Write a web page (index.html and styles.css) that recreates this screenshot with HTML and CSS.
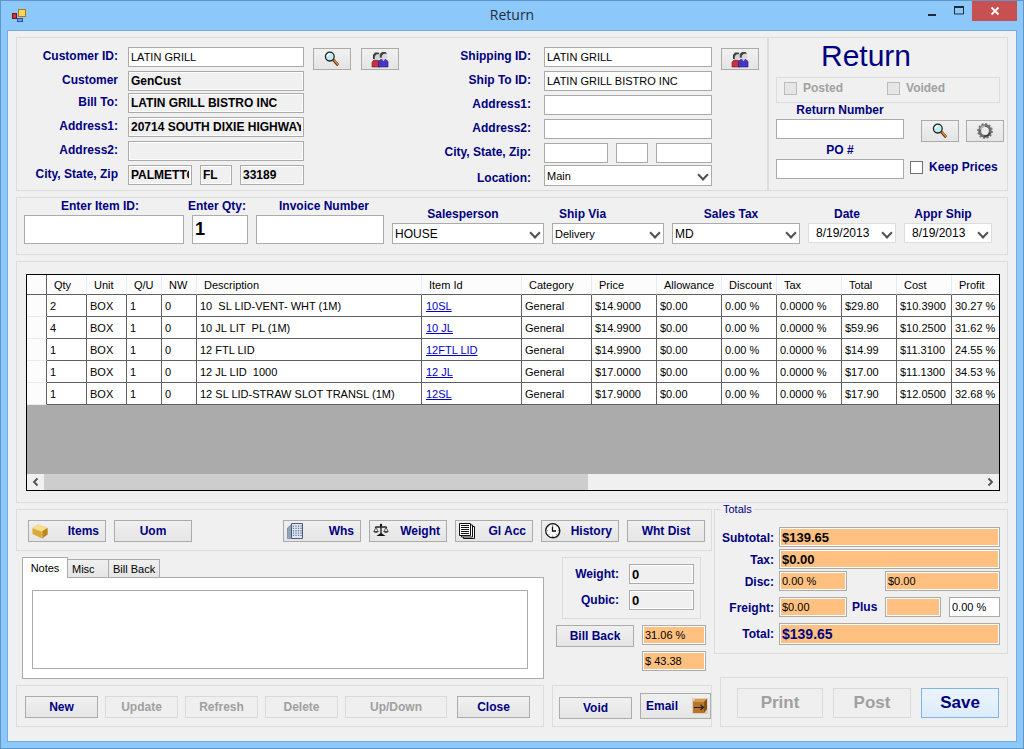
FILE: index.html
```html
<!DOCTYPE html>
<html lang="en">
<head>
	<meta charset="utf-8">
	<title>Return</title>
	<link rel="stylesheet" href="styles.css">
</head>
<body>

<!-- shared icons -->
<svg class="defs" aria-hidden="true">
	<symbol id="i-search" viewBox="0 0 16 16">
		<path d="M9.2 8.8l5 5.400" stroke="#6b3f16" stroke-width="3"/>
		<path d="M9.6 8.8l4.8 5" stroke="#d08a4a" stroke-width="1.6"/>
		<circle cx="5.8" cy="5.6" r="4.400" fill="#bfeef0" stroke="#222" stroke-width="1.3"/>
		<path d="M3.4 5.2a2.5 2.5 0 0 1 2.4-2.4" fill="none" stroke="#fff" stroke-width="1.3"/>
	</symbol>
	<symbol id="i-people" viewBox="0 0 18 17">
		<path d="M1 16v-5l2-2h4l2 2v5z" fill="#c23340" stroke="#7e1822" stroke-width=".6"/>
		<circle cx="5.500" cy="5.500" r="3.600" fill="#d4d4d4"/>
		<path d="M2 8V4l2-2.500h3.500L8.500 3 5 3.500 3.800 5.500V8z" fill="#3a3a3a"/>
		<path d="M7.500 16v-5.500l2-2h5.500l2 2V16z" fill="#4a35c0" stroke="#231378" stroke-width=".6"/>
		<circle cx="12.600" cy="4.800" r="3.700" fill="#d9d9d9"/>
		<path d="M8.800 6.500V3L11 1h3.500l1.500 1.500-3.500.5-1.500 1.500-.5 2.500z" fill="#444"/>
		<path d="M11 8.500h3L12.500 10z" fill="#f4f4f4"/>
	</symbol>
	<symbol id="i-gear" viewBox="0 0 16 16">
		<circle cx="8" cy="8" r="7" fill="none" stroke="#777" stroke-width="1.800" stroke-dasharray="2 1.660"/>
		<circle cx="8" cy="8" r="5.300" fill="none" stroke="#6a6a6a" stroke-width="2.800"/>
		<path d="M3.400 6.500A5 5 0 0 1 8 3" fill="none" stroke="#bbb" stroke-width="1.400"/>
		<path d="M12.600 9.500A5 5 0 0 1 7 13" fill="none" stroke="#333" stroke-width="1.200"/>
	</symbol>
</svg>

<div class="window">
	<header class="titlebar">
		<svg class="appicon" width="14" height="14" viewBox="0 0 14 14">
			<rect x="6.500" y=".5" width="7" height="7" fill="#fbd85a" stroke="#a87818"/>
			<rect x=".5" y="4.500" width="4" height="5" fill="#d03434" stroke="#7c1010"/>
			<rect x="5.500" y="9.500" width="5" height="3" fill="#6d9cf0" stroke="#2c51a8"/>
		</svg>
		<span class="caption">Return</span>
		<div class="winbtns">
			<button class="wbtn" aria-label="Minimize"><svg width="12" height="12" viewBox="0 0 12 12"><path d="M2 9h8v2H2z" fill="#1e2a38"/></svg></button>
			<button class="wbtn" aria-label="Maximize"><svg width="12" height="12" viewBox="0 0 12 12"><path d="M1.500 2h9v7h-9z" fill="none" stroke="#1e2a38"/><path d="M1 1h10v2H1z" fill="#1e2a38"/></svg></button>
			<button class="wbtn wclose" aria-label="Close window"><svg width="10" height="10" viewBox="0 0 10 10"><path d="M1.500 1.500l7 7M8.500 1.500l-7 7" stroke="#fff" stroke-width="1.800"/></svg></button>
		</div>
	</header>

	<main class="content">

		<!-- customer / shipping / return number -->
		<div class="top">
			<section class="panel parties">
				<div class="form customer">
					<label for="custid">Customer ID:</label>
					<input type="text" id="custid" value="LATIN GRILL">
					<label for="cust">Customer</label>
					<input type="text" id="cust" class="ro" value="GenCust" readonly>
					<label for="billto">Bill To:</label>
					<input type="text" id="billto" class="ro" value="LATIN GRILL BISTRO INC" readonly>
					<label for="addr1">Address1:</label>
					<input type="text" id="addr1" class="ro" value="20714 SOUTH DIXIE HIGHWAY" readonly>
					<label for="addr2">Address2:</label>
					<input type="text" id="addr2" class="ro" readonly>
					<label for="city">City, State, Zip</label>
					<div class="csz">
						<input type="text" id="city" class="ro" value="PALMETTO" readonly>
						<input type="text" class="ro" value="FL" aria-label="State" readonly>
						<input type="text" class="ro" value="33189" aria-label="Zip" readonly>
					</div>
				</div>
				<div class="iconbtns">
					<button class="btn" aria-label="Search customer"><svg width="16" height="16"><use href="#i-search"/></svg></button>
					<button class="btn" aria-label="Customer list"><svg width="18" height="17"><use href="#i-people"/></svg></button>
				</div>
				<div class="form shipping">
					<label for="shipid">Shipping ID:</label>
					<input type="text" id="shipid" value="LATIN GRILL">
					<label for="shipto">Ship To ID:</label>
					<input type="text" id="shipto" value="LATIN GRILL BISTRO INC">
					<label for="saddr1">Address1:</label>
					<input type="text" id="saddr1">
					<label for="saddr2">Address2:</label>
					<input type="text" id="saddr2">
					<label for="scity">City, State, Zip:</label>
					<div class="csz">
						<input type="text" id="scity">
						<input type="text" aria-label="Ship state">
						<input type="text" aria-label="Ship zip">
					</div>
					<label for="location" class="low">Location:</label>
					<span class="combo"><select id="location"><option>Main</option></select></span>
				</div>
				<div class="iconbtns">
					<button class="btn" aria-label="Shipping list"><svg width="18" height="17"><use href="#i-people"/></svg></button>
				</div>
			</section>

			<section class="panel retinfo">
				<h1>Return</h1>
				<div class="status">
					<label class="check"><input type="checkbox" disabled> Posted</label>
					<label class="check"><input type="checkbox" disabled> Voided</label>
				</div>
				<div class="numbers">
					<label for="retno">Return Number</label>
					<input type="text" id="retno">
					<div class="iconbtns">
						<button class="btn" aria-label="Find return"><svg width="16" height="16"><use href="#i-search"/></svg></button>
						<button class="btn" aria-label="Settings"><svg width="16" height="16"><use href="#i-gear"/></svg></button>
					</div>
					<label for="po">PO #</label>
					<input type="text" id="po">
					<label class="check keep"><input type="checkbox"> Keep Prices</label>
				</div>
			</section>
		</div>

		<!-- item entry -->
		<section class="panel entry">
			<div class="field item"><label for="itemid">Enter Item ID:</label><input type="text" id="itemid" class="tall"></div>
			<div class="field qty"><label for="qty">Enter Qty:</label><input type="text" id="qty" class="tall" value="1"></div>
			<div class="field invoice"><label for="invoice">Invoice Number</label><input type="text" id="invoice" class="tall"></div>
			<div class="field sales"><label for="sales">Salesperson</label><span class="combo big"><select id="sales"><option>HOUSE</option></select></span></div>
			<div class="field via"><label for="via">Ship Via</label><span class="combo"><select id="via"><option>Delivery</option></select></span></div>
			<div class="field stax"><label for="stax">Sales Tax</label><span class="combo big"><select id="stax"><option>MD</option></select></span></div>
			<div class="field date"><label for="date">Date</label><span class="combo"><input type="text" id="date" value="8/19/2013"></span></div>
			<div class="field date"><label for="appr">Appr Ship</label><span class="combo"><input type="text" id="appr" value="8/19/2013"></span></div>
		</section>

		<!-- lines -->
		<section class="panel lines">
			<div class="grid">
				<table>
					<colgroup>
						<col class="w20"><col class="w40"><col class="w40"><col class="w35"><col class="w35"><col><col class="w100"><col class="w70"><col class="w65"><col class="w65"><col class="w55"><col class="w65"><col class="w55"><col class="w55"><col class="w47">
					</colgroup>
					<thead>
						<tr><th></th><th>Qty</th><th>Unit</th><th>Q/U</th><th>NW</th><th>Description</th><th>Item Id</th><th>Category</th><th>Price</th><th>Allowance</th><th>Discount</th><th>Tax</th><th>Total</th><th>Cost</th><th>Profit</th></tr>
					</thead>
					<tbody>
						<tr><td></td><td>2</td><td>BOX</td><td>1</td><td>0</td><td>10&nbsp; SL LID-VENT- WHT (1M)</td><td><a href="#">10SL</a></td><td>General</td><td>$14.9000</td><td>$0.00</td><td>0.00 %</td><td>0.0000 %</td><td>$29.80</td><td>$10.3900</td><td>30.27 %</td></tr>
						<tr><td></td><td>4</td><td>BOX</td><td>1</td><td>0</td><td>10 JL LIT&nbsp; PL (1M)</td><td><a href="#">10 JL</a></td><td>General</td><td>$14.9900</td><td>$0.00</td><td>0.00 %</td><td>0.0000 %</td><td>$59.96</td><td>$10.2500</td><td>31.62 %</td></tr>
						<tr><td></td><td>1</td><td>BOX</td><td>1</td><td>0</td><td>12 FTL LID</td><td><a href="#">12FTL LID</a></td><td>General</td><td>$14.9900</td><td>$0.00</td><td>0.00 %</td><td>0.0000 %</td><td>$14.99</td><td>$11.3100</td><td>24.55 %</td></tr>
						<tr><td></td><td>1</td><td>BOX</td><td>1</td><td>0</td><td>12 JL LID&nbsp; 1000</td><td><a href="#">12 JL</a></td><td>General</td><td>$17.0000</td><td>$0.00</td><td>0.00 %</td><td>0.0000 %</td><td>$17.00</td><td>$11.1300</td><td>34.53 %</td></tr>
						<tr><td></td><td>1</td><td>BOX</td><td>1</td><td>0</td><td>12 SL LID-STRAW SLOT TRANSL (1M)</td><td><a href="#">12SL</a></td><td>General</td><td>$17.9000</td><td>$0.00</td><td>0.00 %</td><td>0.0000 %</td><td>$17.90</td><td>$12.0500</td><td>32.68 %</td></tr>
					</tbody>
				</table>
				<div class="empty"></div>
				<div class="hscroll">
					<svg width="17" height="16" viewBox="0 0 17 16"><path d="M10.500 4.500L7 8l3.500 3.500" fill="none" stroke="#505050" stroke-width="1.800"/></svg>
					<div class="track"><div class="thumb"></div></div>
					<svg width="17" height="16" viewBox="0 0 17 16"><path d="M6.500 4.500L10 8l-3.500 3.500" fill="none" stroke="#505050" stroke-width="1.800"/></svg>
				</div>
			</div>
		</section>

		<div class="lower">
			<div class="left">
				<section class="panel tools">
					<button class="btn withicon">
						<svg width="16" height="16" viewBox="0 0 16 16"><path d="M.5 5L6 1.500 15.500 5v6.500l-5.500 4L.5 11z" fill="#d9a93a"/><path d="M.5 5L6 1.500 15.500 5 10 8.500z" fill="#f6df8e"/><path d="M10 8.500L15.500 5v6.500l-5.500 4z" fill="#b98622"/><path d="M1.500 5.500L10 8.500V15" fill="none" stroke="#f0cf70" stroke-width=".8"/></svg>
						Items
					</button>
					<button class="btn">Uom</button>
					<button class="btn withicon whs">
						<svg width="16" height="16" viewBox="0 0 16 16"><path d="M.5 5L5 1v14.500H.5z" fill="#8fa3bd" stroke="#63758f" stroke-width=".6"/><path d="M4.500.5h11v15h-11z" fill="#dfe8f3" stroke="#4a5c78"/><path d="M6.500 2.500v11M9 2.500v11M11.500 2.500v11M14 2.500v11" stroke="#6b7f9d" stroke-width="1.300" stroke-dasharray="1.300 1"/></svg>
						Whs
					</button>
					<button class="btn withicon">
						<svg width="16" height="16" viewBox="0 0 16 16"><path d="M8 1.500V11M2 4.500c2-1.500 4 .5 6-1 2 1.500 4-.5 6 1" fill="none" stroke="#111" stroke-width="1.300"/><path d="M3 4.500L.8 8.500h4.400zM13 4.500l-2.200 4h4.400z" fill="none" stroke="#333" stroke-width=".8"/><path d="M.5 8h5q-.5 2-2.500 2T.5 8zM10.500 8h5q-.5 2-2.500 2t-2.500-2z" fill="#444"/><path d="M3.500 13L7 10.500h2L12.500 13z" fill="#111"/><circle cx="8" cy="2" r="1.200" fill="#111"/></svg>
						Weight
					</button>
					<button class="btn withicon">
						<svg width="16" height="16" viewBox="0 0 16 16"><path d="M4.500 3.500h11v12h-11z" fill="#fff" stroke="#111"/><path d="M2.500 2h11v12h-11z" fill="#fff" stroke="#111"/><path d="M.5.5h11v12H.5z" fill="#fff" stroke="#111"/><path d="M2 2.500h8M2 4.500h8M2 6.500h8M2 8.500h8M2 10.500h8" stroke="#111"/></svg>
						Gl Acc
					</button>
					<button class="btn withicon">
						<svg width="16" height="16" viewBox="0 0 16 16"><circle cx="8.500" cy="8.500" r="7" fill="#777"/><circle cx="7.700" cy="7.700" r="7" fill="#fff" stroke="#111" stroke-width="1.200"/><path d="M7.500 3.500V8H11" fill="none" stroke="#111" stroke-width="1.300"/><path d="M7.700 1.700v1M7.700 12.700v1M1.700 7.700h1M12.700 7.700h1M3.500 3.500l.6.600M11.900 3.500l-.6.600M3.500 11.900l.6-.6M11.900 11.900l-.6-.6" stroke="#555"/></svg>
						History
					</button>
					<button class="btn">Wht Dist</button>
				</section>

				<div class="split mid">
					<div class="tabs">
						<div class="tablist" role="tablist">
							<button class="tab active" role="tab">Notes</button>
							<button class="tab misc" role="tab">Misc</button>
							<button class="tab" role="tab">Bill Back</button>
						</div>
						<div class="tabpage"><textarea aria-label="Notes"></textarea></div>
					</div>
					<div class="measures">
						<div class="panel wbox">
							<label for="weight">Weight:</label><input type="text" id="weight" class="ro" value="0" readonly>
							<label for="qubic">Qubic:</label><input type="text" id="qubic" class="ro" value="0" readonly>
						</div>
						<div class="bill">
							<button class="btn">Bill Back</button>
							<input type="text" class="amount" value="31.06 %" aria-label="Bill back percent" readonly>
							<input type="text" class="amount second" value="$ 43.38" aria-label="Bill back amount" readonly>
						</div>
					</div>
				</div>

				<div class="split">
					<section class="panel actions">
						<button class="btn">New</button>
						<button class="btn" disabled>Update</button>
						<button class="btn" disabled>Refresh</button>
						<button class="btn" disabled>Delete</button>
						<button class="btn wide" disabled>Up/Down</button>
						<button class="btn close">Close</button>
					</section>
					<section class="panel voids">
						<button class="btn">Void</button>
						<button class="btn email">Email
							<svg width="16" height="16" viewBox="0 0 16 16"><path d="M0 0h16v16H0z" fill="#dcd0c0"/><path d="M1 4l3-3h11v10l-3 4H1z" fill="#b87428"/><path d="M1 4l3-3h11l-3 3z" fill="#d99a4c"/><path d="M12 4l3-3v10l-3 4z" fill="#8a5216"/><path d="M2 9.500h9M8.500 7l3 2.500-3 2.500" fill="none" stroke="#1a2030" stroke-width="1.200"/></svg>
						</button>
					</section>
				</div>
			</div>

			<div class="right">
				<fieldset class="totals">
					<legend>Totals</legend>
					<label for="sub">Subtotal:</label>
					<input type="text" id="sub" class="amount bold full" value="$139.65" readonly>
					<label for="tax">Tax:</label>
					<input type="text" id="tax" class="amount bold full" value="$0.00" readonly>
					<label for="disc">Disc:</label>
					<input type="text" id="disc" class="amount" value="0.00 %" readonly>
					<input type="text" class="amount discamt" value="$0.00" aria-label="Discount amount" readonly>
					<label for="freight">Freight:</label>
					<input type="text" id="freight" class="amount" value="$0.00" readonly>
					<label for="plus" class="plus">Plus</label>
					<input type="text" id="plus" class="amount" readonly>
					<input type="text" class="pct" value="0.00 %" aria-label="Freight percent">
					<label for="total">Total:</label>
					<input type="text" id="total" class="amount full grand" value="$139.65" readonly>
				</fieldset>
				<section class="panel finish">
					<button class="btn print" disabled>Print</button>
					<button class="btn" disabled>Post</button>
					<button class="btn save">Save</button>
				</section>
			</div>
		</div>

	</main>
</div>
</body>
</html>
```
FILE: styles.css
```css
*{
	box-sizing: border-box;
}
body{
	margin: 0;
	font-family: "Liberation Sans", Arial, sans-serif;
	font-size: 11px;
	color: #000;
}
input, select, button, textarea{
	font-family: inherit;
	font-size: 11px;
	color: #000;
	margin: 0;
	border-radius: 0;
}
.defs{
	position: absolute;
	width: 0;
	height: 0;
}

/* window frame */
.window{
	display: flex;
	flex-direction: column;
	min-height: 100vh;
	padding: 0 6px 6px;
	border: 1px solid #6095c6;
	background: #8dc8fb;
}
.titlebar{
	display: grid;
	grid-template-columns: 1fr auto 1fr;
	height: 29px;
}
.appicon{
	margin: 8px 0 0 5px;
}
.caption{
	font-family: "Open Sans", "Noto Sans", sans-serif;
	font-size: 14px;
	line-height: 28px;
	color: #1e2f40;
}
.winbtns{
	display: flex;
	justify-content: flex-end;
	height: 20px;
}
.wbtn{
	display: flex;
	align-items: center;
	justify-content: center;
	width: 27px;
	padding: 0;
	border: 0;
	background: none;
}
.wclose{
	width: 45px;
	background: #c75050;
}
.content{
	flex: 1;
	display: flex;
	flex-direction: column;
	gap: 6px;
	padding: 6px 8px 14px;
	border: 1px solid #74aade;
	background: #f0f0f0;
}

/* common controls */
.panel{
	border: 1px solid #dcdcdc;
}
label{
	font-size: 12px;
	font-weight: bold;
	line-height: 18px;
	color: #000080;
	white-space: nowrap;
}
input[type=text], select, textarea{
	width: 100%;
	height: 20px;
	padding: 0 2px;
	border: 1px solid #ababab;
	background: #fff;
}
input.ro{
	font-size: 12px;
	font-weight: bold;
	background: #f0f0f0;
	box-shadow: inset 0 0 0 1px #fff;
}
input.amount{
	background: #ffc080;
	box-shadow: inset 0 0 0 1px #fff;
}
select{
	appearance: none;
	display: block;
	height: 21px;
}
.combo{
	display: block;
	position: relative;
}
.combo::after{
	content: "";
	position: absolute;
	right: 5px;
	top: 6px;
	width: 6px;
	height: 6px;
	border: solid #505050;
	border-width: 0 2px 2px 0;
	transform: rotate(45deg);
	pointer-events: none;
}
.combo.big select{
	font-size: 12px;
}
.btn{
	display: flex;
	align-items: center;
	justify-content: center;
	height: 22px;
	padding: 0;
	border: 1px solid #ababab;
	background: linear-gradient(#f0f0f0, #e5e5e5);
	font-size: 12px;
	font-weight: bold;
	color: #000080;
}
.btn:disabled{
	border-color: #d9d9d9;
	background: #efefef;
	color: #a0a0a0;
}
.iconbtns{
	display: flex;
	gap: 10px;
}
.iconbtns .btn{
	width: 38px;
}

/* top */
.top{
	display: grid;
	grid-template-columns: 1fr 240px;
}
.parties{
	display: flex;
	padding: 9px 8px 5px 7px;
}
.form{
	display: grid;
	align-items: start;
}
.form label{
	text-align: right;
}
.customer{
	grid-template-columns: 94px 176px;
	grid-template-rows: 24px 22px 24px 24px 24px 20px;
	column-gap: 10px;
}
.shipping{
	grid-template-columns: 90px 168px;
	grid-template-rows: 24px 24px 24px 24px 22px 20px;
	column-gap: 13px;
	margin-left: auto;
}
.shipping .low{
	padding-top: 4px;
}
.parties .iconbtns{
	margin: 1px 0 0 9px;
	align-items: flex-start;
}
.csz{
	display: grid;
	grid-template-columns: 64px 32px 1fr;
	gap: 8px;
}
.retinfo{
	padding: 0 7px;
}
h1{
	margin: 0;
	padding: 0 44px 3px 0;
	font-size: 30px;
	font-weight: normal;
	line-height: 36px;
	text-align: center;
	color: #000080;
}
.status{
	display: flex;
	gap: 44px;
	height: 26px;
	padding: 0 7px 4px;
	border: 1px solid #dcdcdc;
}
.check{
	display: flex;
	align-items: center;
	gap: 6px;
}
.status .check{
	color: #a0a0a0;
}
.check input{
	appearance: none;
	width: 13px;
	height: 13px;
	border: 1px solid #707070;
	background: #fff;
}
.check input:disabled{
	border-color: #bcbcbc;
	background: #e6e6e6;
}
.numbers{
	display: grid;
	grid-template-columns: 128px 1fr;
	grid-template-rows: 16px 20px 20px 20px;
	column-gap: 6px;
}
.numbers > label:not(.check){
	grid-column: 1;
	align-self: end;
	text-align: center;
}
.numbers > input{
	grid-column: 1;
}
.numbers .iconbtns{
	gap: 7px;
	margin: 1px -5px 0 11px;
}
.keep{
	align-self: start;
	line-height: 16px;
}

/* item entry */
.entry{
	display: flex;
	align-items: flex-start;
	gap: 8px;
	height: 58px;
	padding: 0 15px 0 7px;
}
.field label{
	display: block;
	line-height: 17px;
	text-align: center;
}
.entry .tall{
	height: 29px;
	font-size: 18px;
	font-weight: bold;
}
.item{
	flex: 1;
}
.item label{
	padding-right: 8px;
}
.qty{
	width: 56px;
}
.qty label{
	margin: 0 -4px;
	text-align: left;
}
.invoice{
	width: 128px;
}
.invoice label{
	padding-left: 8px;
}
.sales, .via, .stax, .date{
	padding-top: 8px;
}
.sales{
	width: 152px;
}
.via{
	width: 112px;
}
.via label{
	padding-left: 7px;
	text-align: left;
}
.stax{
	width: 128px;
}
.date{
	width: 88px;
}
.sales label, .stax label, .date label{
	padding-right: 10px;
}
.date input[type=text]{
	padding-left: 7px;
	border-color: #dcdcdc;
	font-size: 12px;
}

/* lines grid */
.lines{
	padding: 12px 7px 11px 9px;
}
.grid{
	border: 1px solid #000;
	background: #fff;
	overflow: hidden;
}
table{
	width: 100%;
	table-layout: fixed;
	border-collapse: separate;
	border-spacing: 0;
}
.w20{ width: 20px; }
.w35{ width: 35px; }
.w40{ width: 40px; }
.w47{ width: 47px; }
.w55{ width: 55px; }
.w65{ width: 65px; }
.w70{ width: 70px; }
.w100{ width: 100px; }
th{
	height: 20px;
	padding: 0 0 0 7px;
	border-right: 1px solid #e3ecf5;
	border-bottom: 1px solid #606060;
	background: #fcfcfc;
	font-weight: normal;
	text-align: left;
	white-space: nowrap;
}
td{
	height: 22px;
	padding: 0 0 0 3px;
	border-right: 1px solid #606060;
	border-bottom: 1px solid #606060;
	white-space: nowrap;
}
th:first-child{
	border-right-color: #606060;
}
td:first-child{
	border-bottom-color: #e3ecf5;
	background: #fcfcfc;
}
th:last-child, td:last-child{
	border-right: 0;
}
td a{
	padding-left: 1px;
	color: #0000c8;
}
.empty{
	height: 69px;
	background: #ababab;
}
.hscroll{
	display: flex;
	height: 16px;
	background: #f0f0f0;
}
.track{
	flex: 1;
}
.thumb{
	width: 58%;
	height: 16px;
	background: #cdcdcd;
}

/* lower part */
.lower{
	display: grid;
	grid-template-columns: 1fr 294px;
	gap: 2px;
}
.left{
	display: flex;
	flex-direction: column;
	gap: 6px;
}
.tools{
	display: flex;
	gap: 8px;
	height: 42px;
	padding: 10px 6px 0 11px;
}
.tools .btn, .bill .btn{
	width: 78px;
}
.tools .withicon{
	justify-content: space-between;
	padding: 0 6px 0 3px;
}
.whs{
	margin-left: auto;
}
.split{
	display: grid;
	grid-template-columns: 1fr 160px;
	gap: 8px;
}
.mid{
	height: 122px;
}
.tabs{
	display: flex;
	flex-direction: column;
	margin-left: 6px;
}
.tablist{
	display: flex;
	align-items: flex-end;
	height: 20px;
}
.tab{
	height: 18px;
	padding: 0 4px;
	border: 1px solid #ababab;
	border-bottom: 0;
	border-left: 0;
	background: linear-gradient(#f0f0f0, #e5e5e5);
}
.tab.misc{
	width: 41px;
	text-align: left;
}
.tab.active{
	position: relative;
	z-index: 1;
	width: 46px;
	height: 21px;
	margin-bottom: -1px;
	border-left: 1px solid #ababab;
	background: #fff;
}
.tabpage{
	flex: 1;
	padding: 12px 15px 9px 9px;
	border: 1px solid #ababab;
	background: #fff;
}
.tabpage textarea{
	display: block;
	height: 79px;
	resize: none;
}
.measures{
	display: flex;
	flex-direction: column;
	gap: 6px;
}
.wbox{
	display: grid;
	grid-template-columns: 1fr 65px;
	align-content: start;
	gap: 6px 10px;
	height: 62px;
	margin: 0 11px 0 10px;
	padding: 6px;
	text-align: right;
}
.wbox label{
	line-height: 20px;
}
.wbox input.ro{
	font-size: 13px;
}
.bill{
	display: grid;
	grid-template-columns: 78px 64px;
	gap: 4px 8px;
	padding-left: 4px;
}
.second{
	grid-column: 2;
}
.actions{
	display: flex;
	gap: 7px;
	height: 42px;
	padding: 10px 8px 0;
}
.actions .btn, .voids .btn{
	width: 73px;
}
.actions .wide{
	width: 102px;
}
.actions .close{
	margin-left: auto;
	margin-right: 5px;
}
.voids{
	display: flex;
	justify-content: space-between;
	height: 42px;
	padding: 7px 0 0 6px;
}
.voids .btn{
	margin-top: 4px;
}
.voids .email{
	width: 71px;
	height: 26px;
	margin-top: 0;
	padding: 0 2px 0 5px;
	justify-content: space-between;
}
.right{
	display: flex;
	flex-direction: column;
	justify-content: space-between;
}

/* totals */
.totals{
	display: grid;
	grid-template-columns: 59px 68px 28px 56px 1fr;
	grid-template-rows: 22px 22px 26px 26px 22px;
	column-gap: 5px;
	margin: -6px 0 0;
	padding: 11px 7px 8px 0;
	border: 1px solid #dcdcdc;
}
.totals legend{
	margin-left: 6px;
	padding: 0 2px;
	line-height: 13px;
	color: #000080;
}
.totals label{
	line-height: 22px;
	text-align: right;
}
.totals .plus{
	line-height: 20px;
	text-align: left;
}
.full{
	grid-column: 2 / -1;
}
.totals .bold{
	font-size: 13px;
	font-weight: bold;
}
.discamt{
	grid-column: 4 / -1;
}
.totals input.pct{
	justify-self: end;
	width: 51px;
}
.totals input.grand{
	height: 22px;
	font-size: 14px;
	font-weight: bold;
	color: #000080;
}
.finish{
	display: flex;
	justify-content: flex-end;
	gap: 10px;
	height: 50px;
	margin-left: 6px;
	padding: 10px 8px 0;
}
.finish .btn{
	width: 78px;
	height: 30px;
	font-size: 17px;
}
.finish .print{
	width: 86px;
}
.btn.save{
	border-color: #7eb4ea;
	background: linear-gradient(#ecf4fc, #dcecfc);
}
```
